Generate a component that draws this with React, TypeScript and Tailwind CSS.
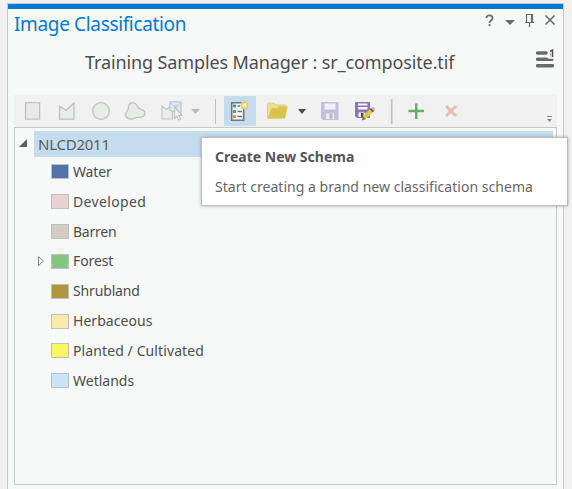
import React from "react";

const classes = [
  { name: "Water", color: "#5273aa", text: "tracking-[-0.15px]" },
  { name: "Developed", color: "#e8d1d1", text: "tracking-[0.35px]" },
  { name: "Barren", color: "#d3ccc0", text: "tracking-[-0.25px]" },
  { name: "Forest", color: "#85c77e", text: "tracking-[-0.1px]", child: true },
  { name: "Shrubland", color: "#af963c", text: "tracking-[-0.15px]" },
  { name: "Herbaceous", color: "#fde9aa", text: "tracking-[0.05px]" },
  { name: "Planted / Cultivated", color: "#fbf65d", text: "tracking-[0.1px]" },
  { name: "Wetlands", color: "#c8e6f8", text: "tracking-[0px]" },
];

function WindowButtons() {
  return (
    <svg width="74" height="18" viewBox="484 12 74 18" fill="none" stroke="#6a6a6a">
      <path d="M486.500 18v-1.200q1-1.500 3-1.500 3 0 3 2.700 0 1.600-1.700 2.800-1.300.9-1.300 2.200" strokeWidth="1.700" />
      <path d="M488.600 24.200h1.900v1.900h-1.900z" fill="#6a6a6a" stroke="none" />
      <path d="M505 20h10l-5 5z" fill="#6a6a6a" stroke="none" />
      <path d="M526.500 22v-7.500h6V22M531.500 15v7M525 22.500h9M529.500 23v4" strokeWidth="1.200" />
      <path d="M545.500 15.500l9 9M554.500 15.500l-9 9" strokeWidth="1.600" />
    </svg>
  );
}

function MenuIcon() {
  return (
    <svg width="20" height="20" viewBox="535 50 20 20" fill="none">
      <path d="M536.500 54h8.500M536.500 60.300h9M536.500 66.700h15" stroke="#6a6a6a" strokeWidth="3.500" strokeLinecap="round" />
      <path d="M546 60.800h5.500" stroke="#6a6a6a" strokeWidth="2.200" strokeLinecap="round" />
      <path d="M549 52.300l2.500-1.300v7" stroke="#4d4c52" strokeWidth="1.500" />
      <path d="M549.500 54v3.500" stroke="#e5b06c" strokeWidth="1" />
    </svg>
  );
}

function ToolbarIcons() {
  return (
    <svg width="542" height="32" viewBox="14 95 542 32" fill="none" className="block">
      <g fill="#e5ede4" stroke="#bfc1bf" strokeWidth="1.300">
        <path d="M25.600 102.600h14v16.500h-14zM59.600 106l6.400 4.300 8-7.400v16.200H59.600z" />
        <circle cx="101" cy="111" r="8.300" />
        <path d="M129.500 104c2.500-2.200 6-1 7.300 1.200 1.200 2 1.900 3.400 4 4.200 4.800 1.200 5.300 4.900 2.600 6.800-2.400 1.800-6.200.8-8.800 2.100-3.700 2-9.100.3-9-3.900.1-2.600 2.300-3.800 2.700-5.800.2-1.600-.2-3.200 1.200-4.600z" />
      </g>
      <g stroke="#c3c5c5" strokeWidth="1.200">
        <path d="M162 106l4.500 3.500 4-3.500h2v13H162z" fill="#eaefe9" />
        <path d="M169.800 101.800H181v11.500h-2l-9.200-3z" fill="#e1ecf3" />
        <path d="M171 103l5 5v-4M181 102l-5 6" stroke="#ccd1d2" />
        <path d="M174.500 106.500v12l2.500-2.300 1.600 3.800 2-.8-1.600-3.700h3z" fill="#eff0f0" />
      </g>
      <path d="M191 109h9l-4.500 5z" fill="#b9bbbb" />
      <path d="M215.500 99v25" stroke="#bfc1c1" />
      <path d="M224 96h32v30h-32z" fill="#c5dcee" />
      <path d="M231.700 102.700h12v17.600h-12z" fill="#f5f8fa" stroke="#707679" strokeWidth="1.600" />
      <path d="M233 104.500h3v3h-3z" fill="#299dda" />
      <path d="M233 110h3v3h-3z" fill="#41b55b" />
      <path d="M233 115.200h3v3h-3z" fill="#ef8935" />
      <path d="M237.500 106h2.500M237.500 111.500h4.500M237.500 116.500h4.500" stroke="#6a7276" strokeWidth="1.400" />
      <path d="M244.500 100.800v9.200M239.900 105.400h9.200M241.300 102.200l6.400 6.400M247.700 102.200l-6.400 6.400" stroke="#e1d489" strokeWidth="1.400" />
      <circle cx="244.500" cy="105.400" r="3" fill="#f6edad" stroke="#dbc967" strokeWidth="1.200" />
      <path d="M267.500 118V104q0-1 1-1h5.500l2 2h9q1 0 1 1v4" fill="#eadf93" stroke="#dfcf76" />
      <path d="M267.700 118.800l3.600-10.600h6l1.800-1.600h8.600l-2.700 12z" fill="#d9c34a" />
      <path d="M298 109h8l-4 5z" fill="#4b4b4b" />
      <path d="M321 102h16.500q1 0 1 1v17H323l-2-2z" fill="#c5bfdc" />
      <path d="M324.500 103.500h11v6h-11z" fill="#f1f0f4" />
      <path d="M326 113.500h8v5.500h-8z" fill="#eeeeef" />
      <path d="M329.500 114h3v4.500h-3z" fill="#b6b6bb" />
      <path d="M355 102h14q1 0 1 1v15h-13l-2-2z" fill="#8877b7" />
      <path d="M358 103.500h9.500v2H358zM358 107h9.500v2.500H358zM358.500 112.500h7v4.500h-7z" fill="#f5f4f8" />
      <path d="M361 113h2.500v4H361z" fill="#4c4c58" />
      <path d="M363 116l7.500-7.500 3 3-7.500 7.500-3.500 1.300z" fill="#e0c940" />
      <path d="M369.800 109.200l1.300-1.300 3 3-1.300 1.300z" fill="#5e5b59" />
      <path d="M371.100 107.900l1.400-1q2.500.6 2.400 3l-.8 1z" fill="#dfa296" />
      <path d="M363 116.500l2.500 2.500-3.500 1.500z" fill="#656461" />
      <path d="M391.700 99v25" stroke="#bfbfbf" strokeWidth="1.700" />
      <path d="M408.500 111h15.500M416.250 103.500v15.500" stroke="#64ac69" strokeWidth="2.400" />
      <path d="M446 106l10 10M456 106l-10 10" stroke="#e2bdb2" strokeWidth="2.900" />
      <path d="M547 116.500h5" stroke="#888" />
      <path d="M547 119h5l-2.500 3z" fill="#888" />
    </svg>
  );
}

export default function App() {
  return (
    <main className="relative h-[489px] w-[572px] overflow-hidden bg-[#f1f1f1] pl-[7px] pt-[3px] font-['Noto_Sans','Liberation_Sans',sans-serif] text-[#4c4c4c]">
      <section className="flex h-[486px] w-[557px] flex-col border-x border-t border-[#c8c8c8] bg-[#f7f9f8]">
        <div className="h-[5px] shrink-0 bg-[#0079d3]" />
        <header className="flex h-[32px] shrink-0 items-start justify-between pl-[6px] pr-[5px]">
          <h1 className="mt-px whitespace-nowrap text-[19px] leading-[28px] tracking-[-0.35px] text-[#0079d3]">Image Classification</h1>
          <div className="mt-[3px]"><WindowButtons /></div>
        </header>
        <div className="flex h-[54px] shrink-0 items-start justify-between pl-[77px] pr-[7px]">
          <h2 className="mt-[7px] whitespace-nowrap text-[18px] leading-[28px] tracking-[-0.12px]">Training Samples Manager : sr_composite.tif</h2>
          <div className="mt-[8px]"><MenuIcon /></div>
        </div>
        <div className="mx-[6px] h-[32px] shrink-0 bg-[#f1f1f1]"><ToolbarIcons /></div>
        <div className="mx-[6px] h-[358px] w-[543px] shrink-0 border border-[#c8c8c8] pt-[3px]">
          <div className="flex h-[26px]">
            <svg width="19" height="26" viewBox="0 0 19 26"><path d="M4 16h8V8z" fill="#5e5e5e" /></svg>
            <div className="w-[519px] bg-[#c5dcee] pl-[4px] text-[15px] leading-[27px] tracking-[-0.25px] text-[#595d60]">NLCD2011</div>
          </div>
          <ul>
            {classes.map((item) => (
              <li key={item.name} className="flex h-[29.85px] items-center pl-[20px] text-[14px] leading-[28px]">
                <div className="w-[16px]">
                  {item.child && <svg width="10" height="12" viewBox="0 0 10 12" fill="none"><path d="M3.500 1.500l5 4.500-5 4.500z" stroke="#858585" /></svg>}
                </div>
                <span className="h-[15px] w-[18px] border border-[#bdc0c3]" style={{ backgroundColor: item.color }} />
                <span className={"ml-[4px] whitespace-nowrap " + item.text}>{item.name}</span>
              </li>
            ))}
          </ul>
        </div>
      </section>
      <div role="tooltip" className="absolute left-[201px] top-[137px] h-[69px] w-[367px] border border-[#bbbdbf] bg-white pl-[13px] pt-[8px] shadow-[0_0_3px_rgba(100,100,100,0.5)]">
        <div className="whitespace-nowrap text-[14px] font-bold leading-[22px] tracking-[0px] text-[#555]">Create New Schema</div>
        <div className="mt-[8px] whitespace-nowrap text-[14px] leading-[22px] tracking-[0.03px] text-[#666]">Start creating a brand new classification schema</div>
      </div>
    </main>
  );
}
